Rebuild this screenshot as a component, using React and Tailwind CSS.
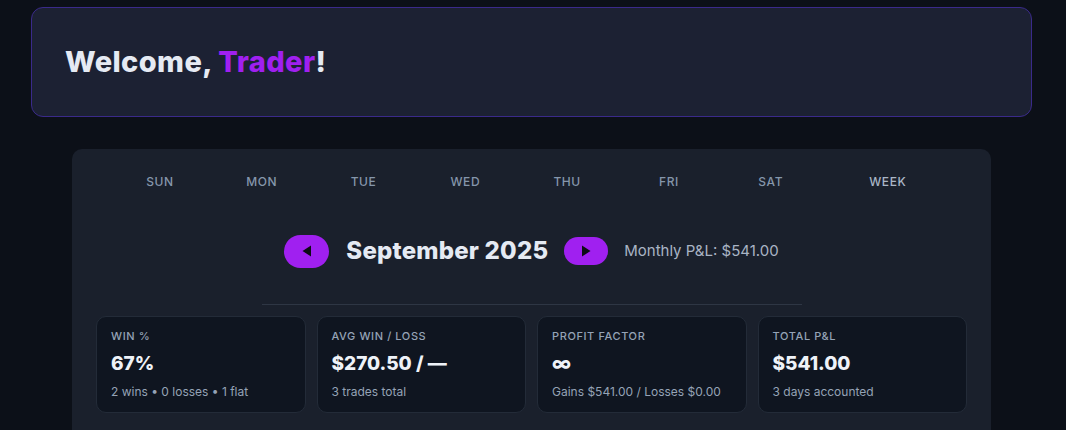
import React from "react";

const days = ["SUN", "MON", "TUE", "WED", "THU", "FRI", "SAT"];

const stats = [
  { label: "WIN %", value: "67%", sub: "2 wins • 0 losses • 1 flat" },
  { label: "AVG WIN / LOSS", value: "$270.50 / —", sub: "3 trades total" },
  { label: "PROFIT FACTOR", value: "∞", sub: "Gains $541.00 / Losses $0.00" },
  { label: "TOTAL P&L", value: "$541.00", sub: "3 days accounted" },
];

export default function App() {
  return (
    <div
      className="min-h-[430px] w-full bg-[#0c1018] pt-[7px] overflow-hidden"
      style={{ fontFamily: "Inter, 'Noto Sans', sans-serif" }}
    >
      <div className="ml-[31px] w-[1001px] h-[110px] rounded-[12px] border border-[#3a2a8a] bg-[#1c2133] flex items-center pl-[33px]">
        <h1 className="text-[29px] font-extrabold text-[#e5eaf3] tracking-[0.4px]">
          Welcome, <span className="text-[#a020f0]">Trader</span>!
        </h1>
      </div>

      <div className="ml-[72px] mt-[32px] w-[919px] h-[300px] rounded-[10px] bg-[#1a202c] pt-[24px]">
        <div className="mx-[37px] grid grid-cols-[repeat(7,minmax(0,1fr))_1.3fr] text-[12px] font-medium tracking-[0.6px]">
          {days.map((d) => (
            <div key={d} className="text-center text-[#8596ab]">
              {d}
            </div>
          ))}
          <div className="text-center text-[#a9b6c6]">WEEK</div>
        </div>

        <div className="mt-[42px] flex items-center justify-center">
          <button className="w-[45px] h-[33px] rounded-full bg-[#a020f0] flex items-center justify-center">
            <svg width="10" height="12" viewBox="0 0 10 12">
              <path d="M9 0.5 L0.5 6 L9 11.5 Z" fill="#0c0c14" />
            </svg>
          </button>
          <div className="ml-[17px] text-[24px] font-extrabold text-[#e5eaf3] tracking-[0.2px]">
            September 2025
          </div>
          <button className="ml-[16px] w-[44px] h-[28px] rounded-full bg-[#a020f0] flex items-center justify-center">
            <svg width="10" height="12" viewBox="0 0 10 12">
              <path d="M1 0.5 L9.5 6 L1 11.5 Z" fill="#0c0c14" />
            </svg>
          </button>
          <div className="ml-[16px] text-[15px] text-[#a9b4c4]">Monthly P&amp;L: $541.00</div>
        </div>

        <div className="mx-auto mt-[35px] w-[540px] h-px bg-[#2e3644]" />

        <div className="mt-[11px] px-[24px] grid grid-cols-4 gap-[11px]">
          {stats.map((s) => (
            <div
              key={s.label}
              className="h-[97px] rounded-[10px] border border-[#232b38] bg-[#0f1520] px-[14px] pt-[11px]"
            >
              <div className="text-[11px] font-medium tracking-[0.6px] text-[#95a3b6]">{s.label}</div>
              <div className="mt-[6px] text-[19px] font-extrabold text-[#eef2f8] leading-[26px]">{s.value}</div>
              <div className="mt-[6px] text-[12px] text-[#95a3b6] whitespace-nowrap">{s.sub}</div>
            </div>
          ))}
        </div>
      </div>
    </div>
  );
}
